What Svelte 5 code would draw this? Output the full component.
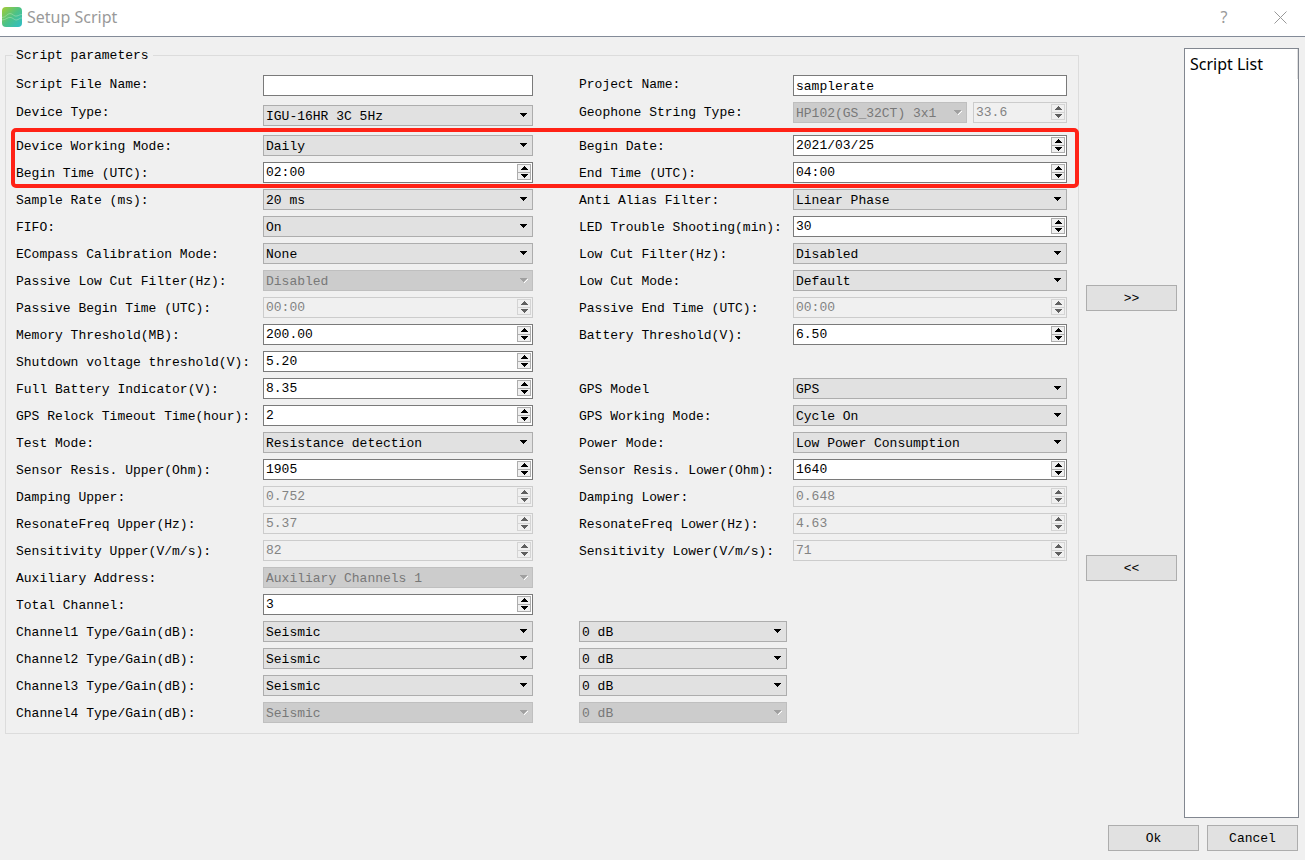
<script lang="ts">
  type Field = {
    label?: string;
    kind: 'text' | 'select' | 'spin';
    value: string;
    disabled?: boolean;
    name?: string;
  };
  type Row = { left: Field; right?: Field; gain?: Field };

  const text = (label: string, value: string): Field => ({ label, kind: 'text', value });
  const select = (label: string, value: string, disabled = false): Field => ({ label, kind: 'select', value, disabled });
  const spin = (label: string, value: string, disabled = false): Field => ({ label, kind: 'spin', value, disabled });

  const nameRow: Row = {
    left: text('Script File Name:', ''),
    right: text('Project Name:', 'samplerate'),
  };

  const deviceType = select('Device Type:', 'IGU-16HR 3C 5Hz');
  const geophoneType = select('Geophone String Type:', 'HP102(GS_32CT) 3x1', true);
  const geophoneValue: Field = { name: 'Geophone value', kind: 'spin', value: '33.6', disabled: true };

  const scheduleRows: Row[] = [
    { left: select('Device Working Mode:', 'Daily'), right: spin('Begin Date:', '2021/03/25') },
    { left: spin('Begin Time (UTC):', '02:00'), right: spin('End Time (UTC):', '04:00') },
  ];

  const rows: Row[] = [
    { left: select('Sample Rate (ms):', '20 ms'), right: select('Anti Alias Filter:', 'Linear Phase') },
    { left: select('FIFO:', 'On'), right: spin('LED Trouble Shooting(min):', '30') },
    { left: select('ECompass Calibration Mode:', 'None'), right: select('Low Cut Filter(Hz):', 'Disabled') },
    { left: select('Passive Low Cut Filter(Hz):', 'Disabled', true), right: select('Low Cut Mode:', 'Default') },
    { left: spin('Passive Begin Time (UTC):', '00:00', true), right: spin('Passive End Time (UTC):', '00:00', true) },
    { left: spin('Memory Threshold(MB):', '200.00'), right: spin('Battery Threshold(V):', '6.50') },
    { left: spin('Shutdown voltage threshold(V):', '5.20') },
    { left: spin('Full Battery Indicator(V):', '8.35'), right: select('GPS Model', 'GPS') },
    { left: spin('GPS Relock Timeout Time(hour):', '2'), right: select('GPS Working Mode:', 'Cycle On') },
    { left: select('Test Mode:', 'Resistance detection'), right: select('Power Mode:', 'Low Power Consumption') },
    { left: spin('Sensor Resis. Upper(Ohm):', '1905'), right: spin('Sensor Resis. Lower(Ohm):', '1640') },
    { left: spin('Damping Upper:', '0.752', true), right: spin('Damping Lower:', '0.648', true) },
    { left: spin('ResonateFreq Upper(Hz):', '5.37', true), right: spin('ResonateFreq Lower(Hz):', '4.63', true) },
    { left: spin('Sensitivity Upper(V/m/s):', '82', true), right: spin('Sensitivity Lower(V/m/s):', '71', true) },
    { left: select('Auxiliary Address:', 'Auxiliary Channels 1', true) },
    { left: spin('Total Channel:', '3') },
    ...[1, 2, 3, 4].map((n) => ({
      left: select(`Channel${n} Type/Gain(dB):`, 'Seismic', n === 4),
      gain: { name: `Channel${n} gain`, kind: 'select', value: '0 dB', disabled: n === 4 } as Field,
    })),
  ];

  function fieldId(f: Field) {
    return (f.label ?? f.name ?? '').toLowerCase().replace(/[^a-z0-9]+/g, '-');
  }
</script>

{#snippet control(f: Field)}
  {#if f.kind === 'select'}
    <div class="combo" class:disabled={f.disabled}>
      <select id={fieldId(f)} disabled={f.disabled} aria-label={f.name}>
        <option>{f.value}</option>
      </select>
      <svg class="arrow" width="8" height="5" viewBox="0 0 8 5" shape-rendering="crispEdges" aria-hidden="true">
        {#if f.disabled}
          <path d="M7 1h1v1h-1v1h-1v1h-1v1h-1v-1h1v-1h1v-1h1z" fill="#fff" />
        {/if}
        <path d="M0 0h7v1h-1v1h-1v1h-1v1h-1v-1h-1v-1h-1v-1h-1z" fill="currentColor" />
      </svg>
    </div>
  {:else if f.kind === 'spin'}
    <div class="spin" class:disabled={f.disabled}>
      <input id={fieldId(f)} type="text" value={f.value} disabled={f.disabled} aria-label={f.name} />
      <div class="steps">
        <button type="button" aria-label="Increase" disabled={f.disabled}>
          <svg width="7" height="4" viewBox="0 0 7 4" shape-rendering="crispEdges">
            <path d="M3 0h1v1h1v1h1v1h1v1h-7v-1h1v-1h1v-1h1z" fill="currentColor" />
          </svg>
        </button>
        <button type="button" aria-label="Decrease" disabled={f.disabled}>
          <svg width="7" height="4" viewBox="0 0 7 4" shape-rendering="crispEdges">
            <path d="M0 0h7v1h-1v1h-1v1h-1v1h-1v-1h-1v-1h-1v-1h-1z" fill="currentColor" />
          </svg>
        </button>
      </div>
    </div>
  {:else}
    <input class="line" id={fieldId(f)} type="text" value={f.value} />
  {/if}
{/snippet}

{#snippet formRow(row: Row, extra: string)}
  <div class="row {extra}">
    <label for={fieldId(row.left)}>{row.left.label}</label>
    {@render control(row.left)}
    {#if row.right}
      <label class="second" for={fieldId(row.right)}>{row.right.label}</label>
      {@render control(row.right)}
    {:else if row.gain}
      <div class="second">{@render control(row.gain)}</div>
    {/if}
  </div>
{/snippet}

<div class="dialog">
  <header>
    <svg class="logo" width="20" height="20" viewBox="0 0 20 20" aria-hidden="true">
      <defs>
        <linearGradient id="logo-fill" x1="0" y1="0" x2="1" y2="1">
          <stop offset="0" stop-color="#a6cc33" />
          <stop offset="0.5" stop-color="#4cc286" />
          <stop offset="1" stop-color="#2ebdc9" />
        </linearGradient>
      </defs>
      <rect width="20" height="20" rx="4" fill="url(#logo-fill)" />
      <g fill="none" stroke="#b9e8c0" stroke-width="0.7" opacity="0.7">
        <path d="M0 10.500C4 10.500 5 6.500 8 6.500S12 10 15 9S18 7.500 20 7.500" />
        <path d="M0 13C4 13 6 9.500 9 10.500S13 14 16 12.500S18 11 20 11" />
      </g>
    </svg>
    <h1>Setup Script</h1>
    <button type="button" class="caption" aria-label="Help">?</button>
    <button type="button" class="caption" aria-label="Close">
      <svg width="13" height="13" viewBox="0 0 13 13">
        <path d="M0.500 0.500l12 12M12.500 0.500l-12 12" stroke="currentColor" fill="none" />
      </svg>
    </button>
  </header>

  <main>
    <fieldset>
      <legend>Script parameters</legend>
      {@render formRow(nameRow, 'names')}
      <div class="row device">
        <label for={fieldId(deviceType)}>{deviceType.label}</label>
        {@render control(deviceType)}
        <label class="second" for={fieldId(geophoneType)}>{geophoneType.label}</label>
        <div class="pair">
          {@render control(geophoneType)}
          {@render control(geophoneValue)}
        </div>
      </div>
      <div class="schedule">
        {#each scheduleRows as row}
          {@render formRow(row, '')}
        {/each}
      </div>
      {#each rows as row}
        {@render formRow(row, '')}
      {/each}
    </fieldset>

    <div class="transfer">
      <button type="button" class="push" aria-label="Add to list">&gt;&gt;</button>
      <button type="button" class="push" aria-label="Remove from list">&lt;&lt;</button>
    </div>

    <section class="list">
      <h2>Script List</h2>
    </section>
  </main>

  <footer>
    <button type="button" class="push">Ok</button>
    <button type="button" class="push">Cancel</button>
  </footer>
</div>

<style>
  :global(body) {
    margin: 0;
    background: #f0f0f0;
  }
  .dialog {
    display: flex;
    flex-direction: column;
    min-height: 100vh;
    box-sizing: border-box;
    padding-bottom: 9px;
    background: #f0f0f0;
    color: #000;
    font: 13px/16px 'Liberation Mono', monospace;
  }
  .dialog * {
    box-sizing: border-box;
  }
  button,
  input,
  select {
    margin: 0;
    padding: 0;
    border-radius: 0;
    font: inherit;
    color: inherit;
  }

  header {
    display: flex;
    align-items: center;
    height: 37px;
    padding: 0 16px 2px 2px;
    background: #fff;
    border-bottom: 1px solid #838b98;
    color: #999;
  }
  h1 {
    flex: 1;
    margin: 0 0 0 5px;
    font: 400 16px/20px 'Noto Sans', sans-serif;
  }
  .caption {
    display: flex;
    align-items: center;
    justify-content: center;
    width: 18px;
    height: 24px;
    border: none;
    background: none;
    font: 16px/20px 'Noto Sans', sans-serif;
  }
  .caption + .caption {
    margin-left: 38px;
  }

  main {
    display: flex;
    flex: 1;
    gap: 7px;
    padding: 11px 6px 7px 5px;
  }
  fieldset {
    flex: 1;
    align-self: flex-start;
    min-width: 0;
    margin: 0;
    padding: 12px 11px 10px 10px;
    border: 1px solid #dcdcdc;
  }
  legend {
    margin-left: -3px;
    padding: 1px 4px 0 3px;
    line-height: 14px;
  }

  /* label, control, spacer, label, control */
  .row {
    display: grid;
    grid-template-columns: 241px minmax(0, 270fr) 34px 208px minmax(0, 274fr);
    column-gap: 6px;
    align-items: center;
    height: 21px;
    margin-bottom: 6px;
  }
  .row:last-child {
    margin-bottom: 0;
  }
  .row label {
    padding-top: 2px;
    white-space: nowrap;
  }
  .second {
    grid-column: 4;
  }
  .names label,
  .device label {
    padding: 0 0 2px;
  }
  .device {
    height: 24px;
    margin-bottom: 9px;
  }
  .device > .combo {
    align-self: end;
  }
  .pair {
    display: grid;
    grid-template-columns: minmax(0, 174fr) minmax(0, 94fr);
    align-self: start;
    gap: 6px;
  }

  .schedule {
    position: relative;
    margin-bottom: 6px;
  }
  .schedule::after {
    content: '';
    position: absolute;
    inset: -7px -12px -5px -5px;
    border: 4px solid #ff2216;
    border-radius: 5px;
    pointer-events: none;
  }

  .combo {
    position: relative;
    height: 21px;
  }
  select {
    display: block;
    width: 100%;
    height: 100%;
    padding: 2px 18px 0 2px;
    border: 1px solid #adadad;
    background: #e1e1e1;
    appearance: none;
  }
  .arrow {
    position: absolute;
    top: 8px;
    right: 5px;
    pointer-events: none;
  }
  .combo.disabled {
    color: #a0a0a0;
  }
  .combo.disabled select {
    border-color: #bfbfbf;
    background: #ccc;
    color: #787878;
    opacity: 1;
  }

  .line {
    width: 100%;
    height: 21px;
    padding: 2px 2px 0;
    border: 1px solid #7a7a7a;
    background: #fff;
  }
  .spin {
    display: flex;
    height: 21px;
    padding: 1px 1px 2px 2px;
    border: 1px solid #7a7a7a;
    background: #fff;
  }
  .spin input {
    flex: 1;
    min-width: 0;
    padding-top: 2px;
    border: none;
    background: none;
  }
  .spin.disabled {
    border-color: #ccc;
    background: #f0f0f0;
    color: #838383;
  }
  .steps {
    display: grid;
    grid-template-rows: 9px 7px;
    width: 14px;
  }
  .steps button {
    display: flex;
    align-items: flex-start;
    justify-content: center;
    padding-top: 1px;
    border: 1px solid #adadad;
    background: #f0f0f0;
  }
  .steps svg {
    flex-shrink: 0;
  }
  .steps button + button {
    border-top: none;
  }
  .disabled .steps button {
    border-color: #d4d4d4;
    color: #606060;
  }

  .transfer {
    display: flex;
    flex-direction: column;
    justify-content: center;
    gap: 244px;
  }
  .push {
    width: 91px;
    height: 26px;
    padding-top: 2px;
    border: 1px solid #adadad;
    background: #e1e1e1;
  }
  .list {
    width: 115px;
    border: 1px solid #828790;
    background: #fff;
  }
  h2 {
    margin: 0;
    padding: 5px 0 5px 5px;
    border-right: 1px solid #e0e0e0;
    font: 400 16px/20px 'Noto Sans', sans-serif;
  }
  footer {
    display: flex;
    justify-content: flex-end;
    gap: 8px;
    padding-right: 7px;
  }
</style>
